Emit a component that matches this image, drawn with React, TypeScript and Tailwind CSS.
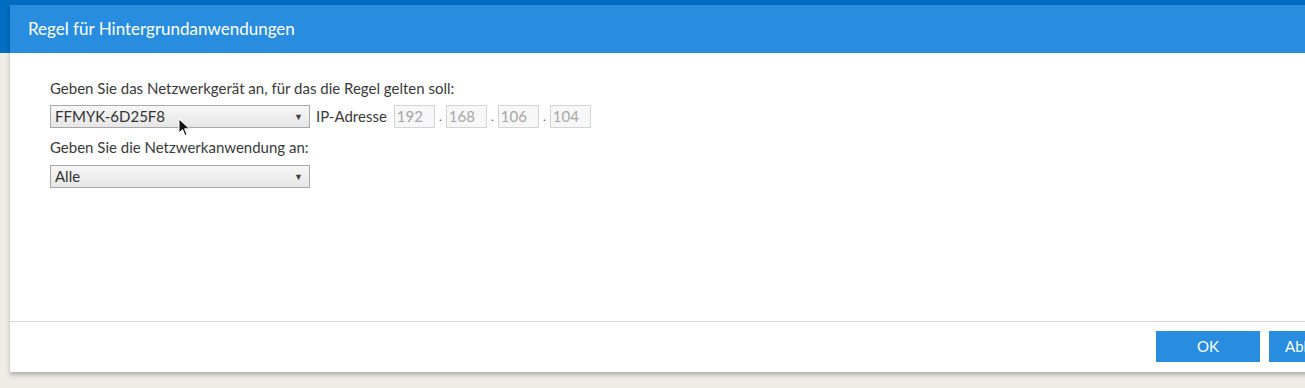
import React from 'react';

const font = { fontFamily: 'Lato, "Open Sans", sans-serif' };

function Select({ value }: { value: string }) {
    return (
        <div className="flex h-[23px] w-[260px] items-center justify-between border border-[#a9a9a9] bg-[linear-gradient(#f7f7f7,#e6e6e6)] pl-[4px] pr-[6px] text-[15px] text-[#333]">
            <span>{value}</span>
            <span className="text-[9px] text-[#444]">▼</span>
        </div>
    );
}

function IpBox({ value }: { value: string }) {
    return (
        <div className="flex h-[23px] w-[41px] items-center border border-[#d4d4d4] bg-[#f7f7f7] pl-[2px] text-[15px] text-[#a6a6a6]">
            {value}
        </div>
    );
}

export default function App() {
    const octets = ['192', '168', '106', '104'];

    return (
        <div
            className="h-[388px] w-[1305px] overflow-hidden bg-[linear-gradient(#006dc0_0px,#006dc0_53px,#efece6_53px)] pl-[10px] pt-[5px]"
            style={font}
        >
            <div className="relative w-[1375px] bg-white shadow-[0_3px_4px_rgba(0,0,0,0.25)]">
                <div className="flex h-[48px] items-center bg-[#288ddf] pl-[18px] text-[17px] text-white">
                    Regel für Hintergrundanwendungen
                </div>

                <div className="h-[268px] px-[40px] pt-[25px]">
                    <p className="text-[15px] leading-[20px] text-[#3a3a3a]">
                        Geben Sie das Netzwerkgerät an, für das die Regel gelten soll:
                    </p>
                    <div className="mt-[7px] flex items-center">
                        <Select value="FFMYK-6D25F8" />
                        <span className="ml-[6px] mr-[7px] text-[15px] text-[#3a3a3a]">IP-Adresse</span>
                        {octets.map((o, i) => (
                            <div key={o + i} className="flex items-center">
                                {i > 0 && <span className="w-[11px] text-center text-[12px] text-[#555]">.</span>}
                                <IpBox value={o} />
                            </div>
                        ))}
                    </div>
                    <p className="mt-[9px] text-[15px] leading-[20px] text-[#3a3a3a]">
                        Geben Sie die Netzwerkanwendung an:
                    </p>
                    <div className="mt-[8px]">
                        <Select value="Alle" />
                    </div>
                </div>

                <div className="flex h-[51px] justify-end gap-[9px] border-t border-[#d5d5d5] pr-[12px] pt-[9px]">
                    <button className="h-[31px] w-[104px] bg-[#288ddf] text-[15px] text-white">OK</button>
                    <button className="h-[31px] w-[104px] bg-[#288ddf] text-[15px] text-white">Abbrechen</button>
                </div>

                <svg
                    className="absolute left-[168px] top-[113px]"
                    width="14"
                    height="20"
                    viewBox="0 0 14 20"
                >
                    <path d="M1 1 L1 15 L4.5 11.5 L7 17.5 L9 16.6 L6.6 10.8 L11.5 10.8 Z" fill="#111" stroke="#fff" strokeWidth="1" />
                </svg>
            </div>
        </div>
    );
}
